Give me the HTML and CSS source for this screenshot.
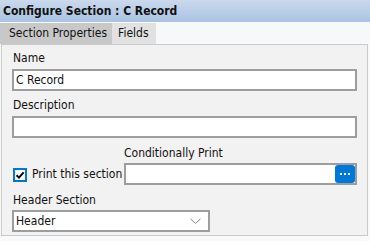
FILE: index.html
```html
<!DOCTYPE html>
<html>
<head>
<meta charset="utf-8">
<link rel="stylesheet" href="styles.css">
</head>
<body>
<div class="title">Configure Section : C Record</div>
<div class="tabs">
  <div class="tab active">Section Properties</div>
  <div class="tab">Fields</div>
</div>
<div class="panel">
  <div class="label first">Name</div>
  <div class="input"><span class="val">C Record</span></div>
  <div class="label">Description</div>
  <div class="input"></div>
  <div class="cond-row">
    <div class="check-col">
      <span class="checkbox">
        <svg width="10" height="10" viewBox="0 0 10 10"><path d="M1.5 5.2 L4 7.6 L8.6 2.4" fill="none" stroke="#000" stroke-width="2"/></svg>
      </span>
      <span class="check-label">Print this section</span>
    </div>
    <div class="cond-col">
      <div class="label cond-label">Conditionally Print</div>
      <div class="input with-btn">
        <span class="dots-btn"><i></i><i></i><i></i></span>
      </div>
    </div>
  </div>
  <div class="label header-label">Header Section</div>
  <div class="input select"><span class="val">Header</span>
    <svg class="chev" width="11" height="7" viewBox="0 0 11 7"><path d="M0.5 0.8 L5.5 5.5 L10.5 0.8" fill="none" stroke="#8a8a8a" stroke-width="1"/></svg>
  </div>
</div>
</body>
</html>
```
FILE: styles.css
```css
html, body {
  margin: 0;
  padding: 0;
}
body {
  width: 370px;
  height: 241px;
  background: #f8f9fb;
  font-family: "DejaVu Sans Condensed", "DejaVu Sans", sans-serif;
  font-stretch: condensed;
  font-size: 12px;
  color: #111;
  overflow: hidden;
}
.title {
  height: 22px;
  line-height: 22px;
  padding-left: 3px;
  font-weight: bold;
  font-size: 12px;
  color: #111;
  background: linear-gradient(to bottom, #cad9ec, #a9c3e3);
}
.tabs {
  display: flex;
  height: 22px;
  padding-top: 1px;
  box-sizing: border-box;
  background: #f7f8fa;
}
.tab {
  line-height: 21px;
  padding: 0 7px 0 6px;
  background: #e1e1e1;
}
.tab.active {
  padding: 0 5px 0 9px;
  background: #c8c8c8;
}
.panel {
  margin: 0 2px 0 1px;
  border: 1px solid #cacaca;
  background: #f2f2f2;
  padding: 5px 9px 5px 10px;
  height: 192px;
  box-sizing: border-box;
}
.label {
  line-height: 16px;
  margin: 6px 0 3px 1px;
}
.label.first {
  margin-top: 0;
}
.input {
  height: 22px;
  box-sizing: border-box;
  border: 2px solid #9d9d9d;
  background: #fff;
  display: flex;
  align-items: center;
  padding-left: 2px;
  margin-right: 1px;
}
.val {
  line-height: 16px;
}
.cond-row {
  display: flex;
  align-items: flex-end;
}
.check-col {
  display: flex;
  align-items: center;
  height: 22px;
  width: 111px;
  padding-left: 1px;
}
.checkbox {
  width: 14px;
  height: 14px;
  box-sizing: border-box;
  border: 2px solid #0078d7;
  background: #fff;
  display: flex;
  align-items: center;
  justify-content: center;
  margin-top: 1px;
}
.check-label {
  margin-left: 5px;
  white-space: nowrap;
}
.cond-col {
  flex: 1;
}
.cond-label {
  margin: 7px 0 2px 0;
}
.with-btn {
  justify-content: flex-end;
  padding-right: 0;
}
.dots-btn {
  width: 20px;
  height: 18px;
  border-radius: 3px;
  background: #0078d7;
  display: flex;
  align-items: center;
  justify-content: center;
  gap: 2px;
}
.dots-btn i {
  width: 2px;
  height: 2px;
  background: #fff;
}
.header-label {
  margin-top: 7px;
  margin-bottom: 2px;
}
.select {
  width: 198px;
  justify-content: space-between;
  padding-right: 7px;
}
.chev {
  display: block;
}
```
